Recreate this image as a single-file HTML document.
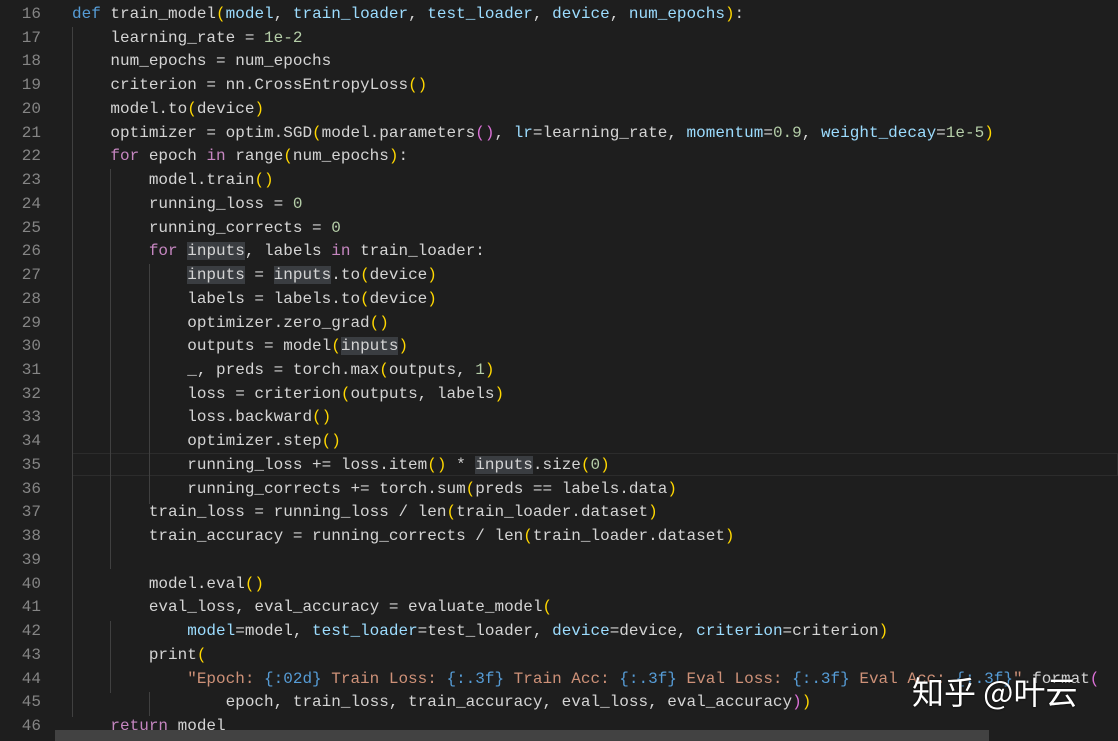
<!DOCTYPE html>
<html><head><meta charset="utf-8"><style>
html,body{margin:0;padding:0;background:#1e1e1e;width:1118px;height:741px;overflow:hidden}
#ln{position:absolute;left:0;top:3px;width:41px;text-align:right;font:16px/23.73px "Liberation Mono",monospace;color:#858585}
#code{position:absolute;left:72px;top:3px;font:16px/23.73px "Liberation Mono",monospace;color:#d4d4d4;white-space:pre}
.k{color:#569cd6}.c{color:#c586c0}.p{color:#9cdcfe}.n{color:#b5cea8}.s{color:#ce9178}.y{color:#ffd700}.m{color:#da70d6}.b{color:#179fff}
.h{background:#3a3d41}
.g{position:absolute;width:1px;background:#404040}
#cur{position:absolute;left:72px;top:453px;width:1046px;height:23px;border:1px solid #2c2c2c;box-sizing:border-box}
#sb{position:absolute;left:55px;top:730px;width:934px;height:11px;background:#424242}
#wm{position:absolute;left:912px;top:668px;font:32px "Noto Sans CJK SC",sans-serif;color:#fff;text-shadow:0 0 2px #000}
</style></head><body>
<div id="cur"></div>
<div class="g" style="left:72px;top:27px;height:690px"></div>
<div class="g" style="left:110px;top:169px;height:400px"></div>
<div class="g" style="left:110px;top:621px;height:72px"></div>
<div class="g" style="left:149px;top:264px;height:240px"></div>
<div class="g" style="left:149px;top:692px;height:24px"></div>
<div id="ln">16<br>17<br>18<br>19<br>20<br>21<br>22<br>23<br>24<br>25<br>26<br>27<br>28<br>29<br>30<br>31<br>32<br>33<br>34<br>35<br>36<br>37<br>38<br>39<br>40<br>41<br>42<br>43<br>44<br>45<br>46</div>
<div id="code"><span class="k">def</span> train_model<span class="y">(</span><span class="p">model</span>, <span class="p">train_loader</span>, <span class="p">test_loader</span>, <span class="p">device</span>, <span class="p">num_epochs</span><span class="y">)</span>:
    learning_rate = <span class="n">1e-2</span>
    num_epochs = num_epochs
    criterion = nn.CrossEntropyLoss<span class="y">()</span>
    model.to<span class="y">(</span>device<span class="y">)</span>
    optimizer = optim.SGD<span class="y">(</span>model.parameters<span class="m">()</span>, <span class="p">lr</span>=learning_rate, <span class="p">momentum</span>=<span class="n">0.9</span>, <span class="p">weight_decay</span>=<span class="n">1e-5</span><span class="y">)</span>
    <span class="c">for</span> epoch <span class="c">in</span> range<span class="y">(</span>num_epochs<span class="y">)</span>:
        model.train<span class="y">()</span>
        running_loss = <span class="n">0</span>
        running_corrects = <span class="n">0</span>
        <span class="c">for</span> <span class="h">inputs</span>, labels <span class="c">in</span> train_loader:
            <span class="h">inputs</span> = <span class="h">inputs</span>.to<span class="y">(</span>device<span class="y">)</span>
            labels = labels.to<span class="y">(</span>device<span class="y">)</span>
            optimizer.zero_grad<span class="y">()</span>
            outputs = model<span class="y">(</span><span class="h">inputs</span><span class="y">)</span>
            _, preds = torch.max<span class="y">(</span>outputs, <span class="n">1</span><span class="y">)</span>
            loss = criterion<span class="y">(</span>outputs, labels<span class="y">)</span>
            loss.backward<span class="y">()</span>
            optimizer.step<span class="y">()</span>
            running_loss += loss.item<span class="y">()</span> * <span class="h">inputs</span>.size<span class="y">(</span><span class="n">0</span><span class="y">)</span>
            running_corrects += torch.sum<span class="y">(</span>preds == labels.data<span class="y">)</span>
        train_loss = running_loss / len<span class="y">(</span>train_loader.dataset<span class="y">)</span>
        train_accuracy = running_corrects / len<span class="y">(</span>train_loader.dataset<span class="y">)</span>

        model.eval<span class="y">()</span>
        eval_loss, eval_accuracy = evaluate_model<span class="y">(</span>
            <span class="p">model</span>=model, <span class="p">test_loader</span>=test_loader, <span class="p">device</span>=device, <span class="p">criterion</span>=criterion<span class="y">)</span>
        print<span class="y">(</span>
            <span class="s">"Epoch: </span><span class="k">{:02d}</span><span class="s"> Train Loss: </span><span class="k">{:.3f}</span><span class="s"> Train Acc: </span><span class="k">{:.3f}</span><span class="s"> Eval Loss: </span><span class="k">{:.3f}</span><span class="s"> Eval Acc: </span><span class="k">{:.3f}</span><span class="s">"</span>.format<span class="m">(</span>
                epoch, train_loss, train_accuracy, eval_loss, eval_accuracy<span class="m">)</span><span class="y">)</span>
    <span class="c">return</span> model</div>
<div id="sb"></div>
<div id="wm">知乎 @叶云</div>
</body></html>
